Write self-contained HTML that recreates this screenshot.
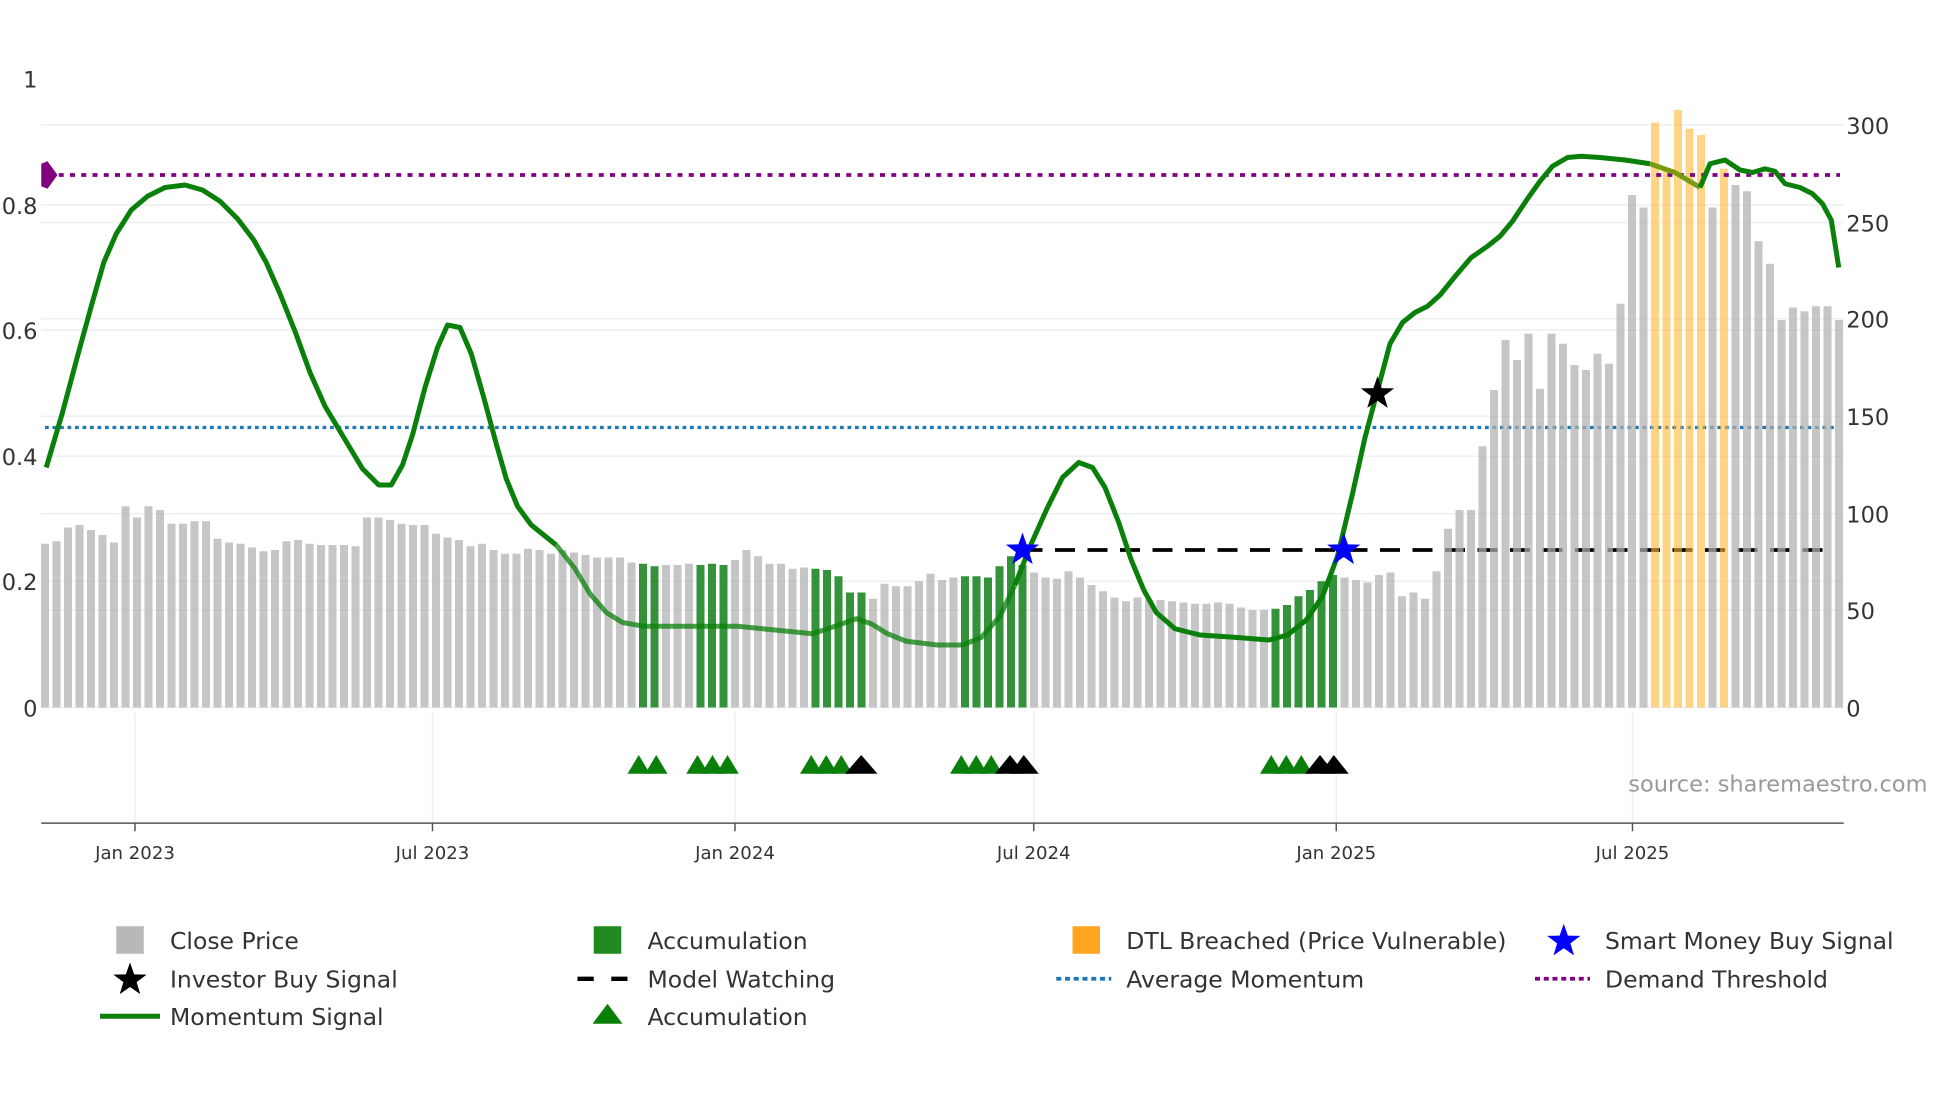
<!DOCTYPE html>
<html><head><meta charset="utf-8"><style>
html,body{margin:0;padding:0;background:#fff;}
svg{display:block;}
text{font-family:"DejaVu Sans","Liberation Sans",sans-serif;fill:#333;}
#b rect[fill="#c4c4c4"]{fill:#b0b0b0;opacity:0.72;}
#b rect[fill="#23892a"]{opacity:0.92;}
#b rect[fill="#ffd080"]{fill:#ffb733;opacity:0.6;}
</style></head><body>
<svg width="1960" height="1102" viewBox="0 0 1568 881.6" xmlns="http://www.w3.org/2000/svg">
<rect width="1568" height="881.6" fill="#fff"/>
<g stroke="#eceff3" stroke-width="1.2">
<line x1="33" x2="1475" y1="100" y2="100"/><line x1="33" x2="1475" y1="178" y2="178"/>
<line x1="33" x2="1475" y1="255" y2="255"/><line x1="33" x2="1475" y1="333" y2="333"/>
<line x1="33" x2="1475" y1="411" y2="411"/><line x1="33" x2="1475" y1="488" y2="488"/>
<line x1="33" x2="1475" y1="164" y2="164"/><line x1="33" x2="1475" y1="264" y2="264"/>
<line x1="33" x2="1475" y1="365" y2="365"/><line x1="33" x2="1475" y1="465" y2="465"/>
<line x1="33" x2="1475" y1="566" y2="566"/>
<line x1="108" x2="108" y1="570" y2="658"/><line x1="346" x2="346" y1="570" y2="658"/>
<line x1="588" x2="588" y1="570" y2="658"/><line x1="827" x2="827" y1="570" y2="658"/>
<line x1="1069" x2="1069" y1="570" y2="658"/><line x1="1306" x2="1306" y1="570" y2="658"/>
</g>
<line x1="36" x2="1470" y1="342" y2="342" stroke="#1f77b4" stroke-width="2.6" stroke-dasharray="3,3"/>
<line x1="818" x2="1465" y1="440" y2="440" stroke="#000" stroke-width="3" stroke-dasharray="16,10"/>
<g id="b">
<rect x="32.8" y="435" width="6.4" height="131" fill="#c4c4c4"/><rect x="42" y="433" width="6.4" height="133" fill="#c4c4c4"/><rect x="51.2" y="422" width="6.4" height="144" fill="#c4c4c4"/><rect x="60.4" y="420" width="6.4" height="146" fill="#c4c4c4"/><rect x="69.6" y="424" width="6.4" height="142" fill="#c4c4c4"/><rect x="78.8" y="428" width="6.4" height="138" fill="#c4c4c4"/><rect x="88" y="434" width="6.4" height="132" fill="#c4c4c4"/><rect x="97.2" y="405" width="6.4" height="161" fill="#c4c4c4"/><rect x="106.4" y="414" width="6.4" height="152" fill="#c4c4c4"/><rect x="115.6" y="405" width="6.4" height="161" fill="#c4c4c4"/>
<rect x="124.8" y="408" width="6.4" height="158" fill="#c4c4c4"/><rect x="134" y="419" width="6.4" height="147" fill="#c4c4c4"/><rect x="143.2" y="419" width="6.4" height="147" fill="#c4c4c4"/><rect x="152.4" y="417" width="6.4" height="149" fill="#c4c4c4"/><rect x="161.6" y="417" width="6.4" height="149" fill="#c4c4c4"/><rect x="170.8" y="431" width="6.4" height="135" fill="#c4c4c4"/><rect x="180" y="434" width="6.4" height="132" fill="#c4c4c4"/><rect x="189.2" y="435" width="6.4" height="131" fill="#c4c4c4"/><rect x="198.4" y="438" width="6.4" height="128" fill="#c4c4c4"/><rect x="207.6" y="441" width="6.4" height="125" fill="#c4c4c4"/>
<rect x="216.8" y="440" width="6.4" height="126" fill="#c4c4c4"/><rect x="226" y="433" width="6.4" height="133" fill="#c4c4c4"/><rect x="235.2" y="432" width="6.4" height="134" fill="#c4c4c4"/><rect x="244.4" y="435" width="6.4" height="131" fill="#c4c4c4"/><rect x="253.6" y="436" width="6.4" height="130" fill="#c4c4c4"/><rect x="262.8" y="436" width="6.4" height="130" fill="#c4c4c4"/><rect x="272" y="436" width="6.4" height="130" fill="#c4c4c4"/><rect x="281.2" y="437" width="6.4" height="129" fill="#c4c4c4"/><rect x="290.4" y="414" width="6.4" height="152" fill="#c4c4c4"/><rect x="299.6" y="414" width="6.4" height="152" fill="#c4c4c4"/>
<rect x="308.8" y="416" width="6.4" height="150" fill="#c4c4c4"/><rect x="318" y="419" width="6.4" height="147" fill="#c4c4c4"/><rect x="327.2" y="420" width="6.4" height="146" fill="#c4c4c4"/><rect x="336.4" y="420" width="6.4" height="146" fill="#c4c4c4"/><rect x="345.6" y="427" width="6.4" height="139" fill="#c4c4c4"/><rect x="354.8" y="430" width="6.4" height="136" fill="#c4c4c4"/><rect x="364" y="432" width="6.4" height="134" fill="#c4c4c4"/><rect x="373.2" y="437" width="6.4" height="129" fill="#c4c4c4"/><rect x="382.4" y="435" width="6.4" height="131" fill="#c4c4c4"/><rect x="391.6" y="440" width="6.4" height="126" fill="#c4c4c4"/>
<rect x="400.8" y="443" width="6.4" height="123" fill="#c4c4c4"/><rect x="410" y="443" width="6.4" height="123" fill="#c4c4c4"/><rect x="419.2" y="439" width="6.4" height="127" fill="#c4c4c4"/><rect x="428.4" y="440" width="6.4" height="126" fill="#c4c4c4"/><rect x="437.6" y="443" width="6.4" height="123" fill="#c4c4c4"/><rect x="446.8" y="440" width="6.4" height="126" fill="#c4c4c4"/><rect x="456" y="442" width="6.4" height="124" fill="#c4c4c4"/><rect x="465.2" y="444" width="6.4" height="122" fill="#c4c4c4"/><rect x="474.4" y="446" width="6.4" height="120" fill="#c4c4c4"/><rect x="483.6" y="446" width="6.4" height="120" fill="#c4c4c4"/>
<rect x="492.8" y="446" width="6.4" height="120" fill="#c4c4c4"/><rect x="502" y="450" width="6.4" height="116" fill="#c4c4c4"/><rect x="511.2" y="451" width="6.4" height="115" fill="#23892a"/><rect x="520.4" y="453" width="6.4" height="113" fill="#23892a"/><rect x="529.6" y="452" width="6.4" height="114" fill="#c4c4c4"/><rect x="538.8" y="452" width="6.4" height="114" fill="#c4c4c4"/><rect x="548" y="451" width="6.4" height="115" fill="#c4c4c4"/><rect x="557.2" y="452" width="6.4" height="114" fill="#23892a"/><rect x="566.4" y="451" width="6.4" height="115" fill="#23892a"/><rect x="575.6" y="452" width="6.4" height="114" fill="#23892a"/>
<rect x="584.8" y="448" width="6.4" height="118" fill="#c4c4c4"/><rect x="594" y="440" width="6.4" height="126" fill="#c4c4c4"/><rect x="603.2" y="445" width="6.4" height="121" fill="#c4c4c4"/><rect x="612.4" y="451" width="6.4" height="115" fill="#c4c4c4"/><rect x="621.6" y="451" width="6.4" height="115" fill="#c4c4c4"/><rect x="630.8" y="455" width="6.4" height="111" fill="#c4c4c4"/><rect x="640" y="454" width="6.4" height="112" fill="#c4c4c4"/><rect x="649.2" y="455" width="6.4" height="111" fill="#23892a"/><rect x="658.4" y="456" width="6.4" height="110" fill="#23892a"/><rect x="667.6" y="461" width="6.4" height="105" fill="#23892a"/>
<rect x="676.8" y="474" width="6.4" height="92" fill="#23892a"/><rect x="686" y="474" width="6.4" height="92" fill="#23892a"/><rect x="695.2" y="479" width="6.4" height="87" fill="#c4c4c4"/><rect x="704.4" y="467" width="6.4" height="99" fill="#c4c4c4"/><rect x="713.6" y="469" width="6.4" height="97" fill="#c4c4c4"/><rect x="722.8" y="469" width="6.4" height="97" fill="#c4c4c4"/><rect x="732" y="465" width="6.4" height="101" fill="#c4c4c4"/><rect x="741.2" y="459" width="6.4" height="107" fill="#c4c4c4"/><rect x="750.4" y="464" width="6.4" height="102" fill="#c4c4c4"/><rect x="759.6" y="462" width="6.4" height="104" fill="#c4c4c4"/>
<rect x="768.8" y="461" width="6.4" height="105" fill="#23892a"/><rect x="778" y="461" width="6.4" height="105" fill="#23892a"/><rect x="787.2" y="462" width="6.4" height="104" fill="#23892a"/><rect x="796.4" y="453" width="6.4" height="113" fill="#23892a"/><rect x="805.6" y="445" width="6.4" height="121" fill="#23892a"/><rect x="814.8" y="452" width="6.4" height="114" fill="#23892a"/><rect x="824" y="458" width="6.4" height="108" fill="#c4c4c4"/><rect x="833.2" y="462" width="6.4" height="104" fill="#c4c4c4"/><rect x="842.4" y="463" width="6.4" height="103" fill="#c4c4c4"/><rect x="851.6" y="457" width="6.4" height="109" fill="#c4c4c4"/>
<rect x="860.8" y="462" width="6.4" height="104" fill="#c4c4c4"/><rect x="870" y="468" width="6.4" height="98" fill="#c4c4c4"/><rect x="879.2" y="473" width="6.4" height="93" fill="#c4c4c4"/><rect x="888.4" y="478" width="6.4" height="88" fill="#c4c4c4"/><rect x="897.6" y="481" width="6.4" height="85" fill="#c4c4c4"/><rect x="906.8" y="478" width="6.4" height="88" fill="#c4c4c4"/><rect x="916" y="480" width="6.4" height="86" fill="#c4c4c4"/><rect x="925.2" y="480" width="6.4" height="86" fill="#c4c4c4"/><rect x="934.4" y="481" width="6.4" height="85" fill="#c4c4c4"/><rect x="943.6" y="482" width="6.4" height="84" fill="#c4c4c4"/>
<rect x="952.8" y="483" width="6.4" height="83" fill="#c4c4c4"/><rect x="962" y="483" width="6.4" height="83" fill="#c4c4c4"/><rect x="971.2" y="482" width="6.4" height="84" fill="#c4c4c4"/><rect x="980.4" y="483" width="6.4" height="83" fill="#c4c4c4"/><rect x="989.6" y="486" width="6.4" height="80" fill="#c4c4c4"/><rect x="998.8" y="488" width="6.4" height="78" fill="#c4c4c4"/><rect x="1008" y="488" width="6.4" height="78" fill="#c4c4c4"/><rect x="1017.2" y="487" width="6.4" height="79" fill="#23892a"/><rect x="1026.4" y="484" width="6.4" height="82" fill="#23892a"/><rect x="1035.6" y="477" width="6.4" height="89" fill="#23892a"/>
<rect x="1044.8" y="472" width="6.4" height="94" fill="#23892a"/><rect x="1054" y="465" width="6.4" height="101" fill="#23892a"/><rect x="1063.2" y="460" width="6.4" height="106" fill="#23892a"/><rect x="1072.4" y="462" width="6.4" height="104" fill="#c4c4c4"/><rect x="1081.6" y="464" width="6.4" height="102" fill="#c4c4c4"/><rect x="1090.8" y="466" width="6.4" height="100" fill="#c4c4c4"/><rect x="1100" y="460" width="6.4" height="106" fill="#c4c4c4"/><rect x="1109.2" y="458" width="6.4" height="108" fill="#c4c4c4"/><rect x="1118.4" y="477" width="6.4" height="89" fill="#c4c4c4"/><rect x="1127.6" y="474" width="6.4" height="92" fill="#c4c4c4"/>
<rect x="1136.8" y="479" width="6.4" height="87" fill="#c4c4c4"/><rect x="1146" y="457" width="6.4" height="109" fill="#c4c4c4"/><rect x="1155.2" y="423" width="6.4" height="143" fill="#c4c4c4"/><rect x="1164.4" y="408" width="6.4" height="158" fill="#c4c4c4"/><rect x="1173.6" y="408" width="6.4" height="158" fill="#c4c4c4"/><rect x="1182.8" y="357" width="6.4" height="209" fill="#c4c4c4"/><rect x="1192" y="312" width="6.4" height="254" fill="#c4c4c4"/><rect x="1201.2" y="272" width="6.4" height="294" fill="#c4c4c4"/><rect x="1210.4" y="288" width="6.4" height="278" fill="#c4c4c4"/><rect x="1219.6" y="267" width="6.4" height="299" fill="#c4c4c4"/>
<rect x="1228.8" y="311" width="6.4" height="255" fill="#c4c4c4"/><rect x="1238" y="267" width="6.4" height="299" fill="#c4c4c4"/><rect x="1247.2" y="275" width="6.4" height="291" fill="#c4c4c4"/><rect x="1256.4" y="292" width="6.4" height="274" fill="#c4c4c4"/><rect x="1265.6" y="296" width="6.4" height="270" fill="#c4c4c4"/><rect x="1274.8" y="283" width="6.4" height="283" fill="#c4c4c4"/><rect x="1284" y="291" width="6.4" height="275" fill="#c4c4c4"/><rect x="1293.2" y="243" width="6.4" height="323" fill="#c4c4c4"/><rect x="1302.4" y="156" width="6.4" height="410" fill="#c4c4c4"/><rect x="1311.6" y="166" width="6.4" height="400" fill="#c4c4c4"/>
<rect x="1320.8" y="98" width="6.4" height="468" fill="#ffd080"/><rect x="1330" y="136" width="6.4" height="430" fill="#ffd080"/><rect x="1339.2" y="88" width="6.4" height="478" fill="#ffd080"/><rect x="1348.4" y="103" width="6.4" height="463" fill="#ffd080"/><rect x="1357.6" y="108" width="6.4" height="458" fill="#ffd080"/><rect x="1366.8" y="166" width="6.4" height="400" fill="#c4c4c4"/><rect x="1376" y="135" width="6.4" height="431" fill="#ffd080"/><rect x="1385.2" y="148" width="6.4" height="418" fill="#c4c4c4"/><rect x="1394.4" y="153" width="6.4" height="413" fill="#c4c4c4"/><rect x="1403.6" y="193" width="6.4" height="373" fill="#c4c4c4"/>
<rect x="1412.8" y="211" width="6.4" height="355" fill="#c4c4c4"/><rect x="1422" y="256" width="6.4" height="310" fill="#c4c4c4"/><rect x="1431.2" y="246" width="6.4" height="320" fill="#c4c4c4"/><rect x="1440.4" y="249" width="6.4" height="317" fill="#c4c4c4"/><rect x="1449.6" y="245" width="6.4" height="321" fill="#c4c4c4"/><rect x="1458.8" y="245" width="6.4" height="321" fill="#c4c4c4"/><rect x="1468" y="256" width="6.4" height="310" fill="#c4c4c4"/>
</g>
<line x1="38" x2="1472" y1="140" y2="140" stroke="#800080" stroke-width="3" stroke-dasharray="4,5"/>
<path d="M33 131 L38 129 L46 140 L38 151 L33 149 Z" fill="#800080"/>
<path fill="none" stroke="#0a800a" stroke-width="4" stroke-linejoin="round" d="M37 374 L50 330 L62 285 L73 245 L83 210 L93 187 L105 168 L118 157 L132 150 L148 148 L162 152 L176 161 L190 175 L203 192 L213 210 L224 235 L236 265 L248 298 L260 325 L275 350 L290 375 L303 388 L313 388 L322 372 L330 348 L340 310 L350 278 L358 260 L368 262 L377 283 L387 318 L397 355 L405 383 L414 405 L425 420 L445 436"/>
<path fill="none" stroke="#0a800a" stroke-opacity="0.75" stroke-width="4" stroke-linejoin="round" d="M445 436 L460 455 L472 475 L485 490 L498 498 L515 501 L540 501 L590 501 L620 504 L650 507 L668 501 L685 495 L697 499 L710 507 L725 513 L750 516 L770 516 L785 510 L800 493 L812 468"/>
<path fill="none" stroke="#0a800a" stroke-width="4" stroke-linejoin="round" d="M812 468 L825 435 L838 406 L850 382 L863 370 L874 374 L884 390 L895 418 L905 448 L915 472 L925 490 L940 503 L960 508 L990 510 L1015 512 L1030 508 L1045 496 L1058 477 L1070 445 L1082 395 L1092 350 L1100 320 L1112 275 L1122 258 L1132 250 L1142 245 L1152 236 L1165 220 L1177 206 L1190 197 L1200 189 L1210 177 L1222 159 L1232 145 L1242 133 L1254 126 L1265 125 L1280 126 L1300 128 L1320 131"/>
<path fill="none" stroke="#7a9a10" stroke-width="4" d="M1320 131 L1340 138 L1360 150"/>
<path fill="none" stroke="#0a800a" stroke-width="4" stroke-linejoin="round" d="M1360 150 L1368 131 L1380 128 L1392 136 L1402 138 L1412 135 L1420 137 L1428 147 L1440 150 L1450 155 L1458 163 L1465 176 L1471 214"/>
<defs><path id="st" d="M0 -14 L3.3 -4.5 L13.3 -4.3 L5.3 1.7 L8.2 11.3 L0 5.6 L-8.2 11.3 L-5.3 1.7 L-13.3 -4.3 L-3.3 -4.5 Z"/></defs>
<use href="#st" x="818" y="440" fill="#0000ff"/>
<use href="#st" x="1075" y="440" fill="#0000ff"/>
<use href="#st" x="1102" y="315" fill="#000"/>
<g fill="#0a800a">
<path d="M502 619 L511 604 L520 619Z"/><path d="M516 619 L525 604 L534 619Z"/>
<path d="M549 619 L558 604 L567 619Z"/><path d="M561 619 L570 604 L579 619Z"/><path d="M573 619 L582 604 L591 619Z"/>
<path d="M640 619 L649 604 L658 619Z"/><path d="M652 619 L661 604 L670 619Z"/><path d="M664 619 L673 604 L682 619Z"/>
<path d="M760 619 L769 604 L778 619Z"/><path d="M772 619 L781 604 L790 619Z"/><path d="M784 619 L793 604 L802 619Z"/>
<path d="M1008 619 L1017 604 L1026 619Z"/><path d="M1020 619 L1029 604 L1038 619Z"/><path d="M1032 619 L1041 604 L1050 619Z"/>
</g>
<g fill="#000">
<path d="M676 619 L689 604 L702 619Z"/>
<path d="M796 619 L808 604 L820 619Z"/><path d="M808 619 L819 604 L831 619Z"/>
<path d="M1044 619 L1056 604 L1068 619Z"/><path d="M1056 619 L1067 604 L1079 619Z"/>
</g>
<line x1="33" x2="1475" y1="658.5" y2="658.5" stroke="#555" stroke-width="1.2"/>
<g stroke="#555" stroke-width="1.2">
<line x1="108" x2="108" y1="658" y2="665"/><line x1="346" x2="346" y1="658" y2="665"/><line x1="588" x2="588" y1="658" y2="665"/><line x1="827" x2="827" y1="658" y2="665"/><line x1="1069" x2="1069" y1="658" y2="665"/><line x1="1306" x2="1306" y1="658" y2="665"/>
</g>
<g font-size="14.5" text-anchor="middle">
<text x="108" y="687">Jan 2023</text><text x="346" y="687">Jul 2023</text><text x="588" y="687">Jan 2024</text><text x="827" y="687">Jul 2024</text><text x="1069" y="687">Jan 2025</text><text x="1306" y="687">Jul 2025</text>
</g>
<g font-size="18" text-anchor="end">
<text x="30" y="70">1</text><text x="30" y="171">0.8</text><text x="30" y="271">0.6</text><text x="30" y="372">0.4</text><text x="30" y="472">0.2</text><text x="30" y="573">0</text>
</g>
<g font-size="18">
<text x="1477" y="107">300</text><text x="1477" y="185">250</text><text x="1477" y="262">200</text><text x="1477" y="340">150</text><text x="1477" y="418">100</text><text x="1477" y="495">50</text><text x="1477" y="573">0</text>
</g>
<text x="1542" y="633" font-size="18" text-anchor="end" style="fill:#999">source: sharemaestro.com</text>
<g font-size="18.8">
<rect x="93" y="741" width="22" height="22" fill="#b8b8b8"/><text x="136" y="759">Close Price</text>
<use href="#st" x="104" y="784" fill="#000"/><text x="136" y="790">Investor Buy Signal</text>
<line x1="80" x2="128" y1="813" y2="813" stroke="#0a800a" stroke-width="4"/><text x="136" y="820">Momentum Signal</text>
<rect x="475" y="741" width="22" height="22" fill="#1f8a1f"/><text x="518" y="759">Accumulation</text>
<line x1="462" x2="506" y1="783" y2="783" stroke="#000" stroke-width="3.5" stroke-dasharray="13,14"/><text x="518" y="790">Model Watching</text>
<path d="M474 819 L486 803 L498 819Z" fill="#0a800a"/><text x="518" y="820">Accumulation</text>
<rect x="858" y="741" width="22" height="22" fill="#ffa520"/><text x="901" y="759">DTL Breached (Price Vulnerable)</text>
<line x1="845" x2="889" y1="783" y2="783" stroke="#1f77b4" stroke-width="3" stroke-dasharray="4,3"/><text x="901" y="790">Average Momentum</text>
<use href="#st" x="1251" y="753" fill="#0000ff"/><text x="1284" y="759">Smart Money Buy Signal</text>
<line x1="1228" x2="1272" y1="783" y2="783" stroke="#800080" stroke-width="3" stroke-dasharray="4,3"/><text x="1284" y="790">Demand Threshold</text>
</g>
</svg>
</body></html>
